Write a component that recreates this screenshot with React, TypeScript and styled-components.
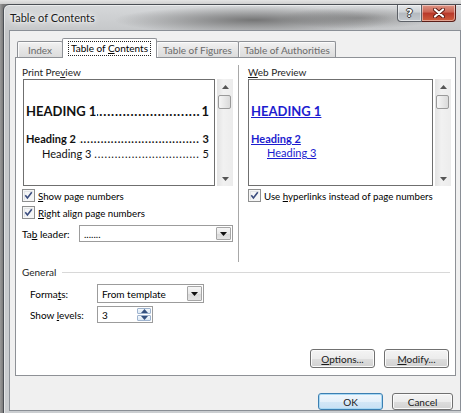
import styled, {createGlobalStyle} from 'styled-components';

const GlobalStyle = createGlobalStyle`
	html, body {
		margin: 0;
		padding: 0;
		background: #5f5f5f;
	}
	* {
		box-sizing: border-box;
	}
`;

const uiFont = `Lato, 'Liberation Sans', Arial, sans-serif`;

const Screen = styled.div`
	width: 461px;
	height: 413px;
	overflow: hidden;
	padding: 4px 0 0 3px;
	background:
		linear-gradient(to bottom, #e4e4e4 0, #cfcfcf 4px, transparent 4px),
		linear-gradient(to right, #9a9a9a 0, #7a7a7a 3px, #6a6a6a 100%);
	font-family: ${uiFont};
	font-size: 10px;
	color: #000;
`;

const Window = styled.div`
	width: 464px;
	height: 414px;
	display: flex;
	flex-direction: column;
	padding: 0 5px;
	border: 1px solid #4b4f55;
	border-radius: 6px 6px 0 0;
	background:
		radial-gradient(ellipse 140px 14px at 250px 15px, rgba(95, 95, 95, 0.8), rgba(95, 95, 95, 0)),
		radial-gradient(ellipse 80px 11px at 355px 13px, rgba(110, 110, 110, 0.6), rgba(110, 110, 110, 0)),
		linear-gradient(to bottom, #d6d8da, #c4c6c8 28px, #cbced1);
	box-shadow: inset 0 0 0 1px rgba(255, 255, 255, 0.5);
`;

const TitleBar = styled.div`
	height: 25px;
	display: flex;
	align-items: flex-start;
`;

const Title = styled.div`
	margin-top: 6px;
	padding-left: 1px;
	font-size: 11px;
	line-height: 14px;
	color: #1a1a1a;
	text-shadow: 0 0 6px #fff, 0 0 10px #fff, 0 0 3px #fff;
`;

const CaptionButtons = styled.div`
	display: flex;
	margin-left: auto;
	margin-right: 5px;
	height: 17px;
`;

const CaptionButton = styled.div<{$close?: boolean}>`
	display: flex;
	align-items: center;
	justify-content: center;
	width: ${p => (p.$close ? 34 : 25)}px;
	height: 17px;
	border: 1px solid ${p => (p.$close ? '#5a1e18' : '#5c6066')};
	border-top: none;
	border-left-width: ${p => (p.$close ? 0 : 1)}px;
	border-radius: ${p => (p.$close ? '0 0 4px 0' : '0 0 0 4px')};
	background: ${p =>
		p.$close
			? 'linear-gradient(to bottom, #dd9585 0%, #cc6352 45%, #b8382a 50%, #cf5d3c 100%)'
			: 'linear-gradient(to bottom, #e6e8ea 0%, #cdd1d5 45%, #b4b9bf 50%, #c4c9ce 100%)'};
	box-shadow: inset 0 0 0 1px rgba(255, 255, 255, 0.45);
`;

const HelpGlyph = styled.span`
	font-family: 'DejaVu Sans', sans-serif;
	font-size: 11px;
	font-weight: 700;
	color: #fff;
	text-shadow: 1px 0 0 #333, -1px 0 0 #333, 0 1px 0 #333, 0 -1px 0 #333;
	line-height: 1;
`;

const Client = styled.div`
	height: 381px;
	display: flex;
	flex-direction: column;
	padding: 7px 4px 0 5px;
	border: 1px solid #8a8f96;
	background: #f0f0f0;
`;

const TabStrip = styled.div`
	position: relative;
	z-index: 1;
	display: flex;
	align-items: flex-end;
	height: 20px;
	margin-bottom: -1px;
	padding-left: 2px;
`;

const Tab = styled.div<{$width: number; $active?: boolean}>`
	display: flex;
	align-items: center;
	justify-content: center;
	width: ${p => p.$width}px;
	height: ${p => (p.$active ? 20 : 16)}px;
	margin-bottom: ${p => (p.$active ? 0 : 1)}px;
	margin-left: -1px;
	border: 1px solid #8e9196;
	border-bottom: none;
	border-radius: 2px 2px 0 0;
	background: ${p =>
		p.$active ? '#fff' : 'linear-gradient(to bottom, #f2f2f2 0%, #e6e6e6 50%, #dcdcdc 100%)'};
	box-shadow: ${p => (p.$active ? 'none' : 'inset 1px 1px 0 #fbfbfb')};
	color: ${p => (p.$active ? '#000' : '#6a6a6a')};
	white-space: nowrap;

	&:first-child {
		margin-left: 0;
	}
`;

const FocusRing = styled.span`
	padding: 1px 2px;
	border: 1px dotted #222;
	line-height: 11px;
`;

const Panel = styled.div`
	width: 441px;
	height: 320px;
	display: flex;
	flex-direction: column;
	border: 1px solid #8e9196;
	background: #fff;
`;

const Upper = styled.div`
	display: flex;
	height: 197px;
	margin-top: 7px;
`;

const Column = styled.div<{$left?: boolean}>`
	display: flex;
	flex-direction: column;
	width: ${p => (p.$left ? '223px' : 'auto')};
	flex: ${p => (p.$left ? 'none' : 1)};
	padding-left: ${p => (p.$left ? 6 : 9)}px;
	border-right: ${p => (p.$left ? '1px solid #a8a8a8' : 'none')};
`;

const SectionLabel = styled.div`
	height: 14px;
	line-height: 14px;
	color: #1e1e1e;
`;

const PreviewFrame = styled.div<{$width: number; $offset: number}>`
	display: flex;
	gap: 2px;
	width: ${p => p.$width}px;
	height: 107px;
	margin-left: ${p => p.$offset}px;
`;

const PreviewBox = styled.div`
	flex: 1;
	display: flex;
	flex-direction: column;
	padding: 23px 5px 0 2px;
	border: 1px solid #6f6f6f;
	background: #fff;
	overflow: hidden;
`;

const TocLine = styled.div<{$size: number; $bold?: boolean; $indent?: number; $gap: number}>`
	display: flex;
	margin-top: ${p => p.$gap}px;
	padding-left: ${p => p.$indent ?? 0}px;
	font-family: ${uiFont};
	font-size: ${p => p.$size}px;
	line-height: ${p => p.$size + 3}px;
	font-weight: ${p => (p.$bold ? 700 : 400)};
	color: #111;
	white-space: nowrap;

	&:first-child {
		margin-top: 0;
	}
`;

const Leader = styled.span<{$space?: number}>`
	flex: 1;
	min-width: 0;
	overflow: hidden;
	direction: rtl;
	margin: 0 ${p => p.$space ?? 0}px;
	letter-spacing: 0.8px;

	&::before {
		content: '..............................................................................';
	}
`;

const WebLink = styled.span<{$size: number; $bold?: boolean; $indent?: number; $gap: number}>`
	display: block;
	margin-top: ${p => p.$gap}px;
	padding-left: ${p => p.$indent ?? 0}px;
	font-size: ${p => p.$size}px;
	line-height: ${p => p.$size + 3}px;
	font-weight: ${p => (p.$bold ? 700 : 400)};
	color: #1c1ccf;
	text-decoration: underline;
	white-space: nowrap;

	&:first-child {
		margin-top: 0;
	}
`;

const Track = styled.div`
	display: flex;
	flex-direction: column;
	width: 16px;
	background: linear-gradient(to right, #e3e3e3, #f1f1f1 40%, #ececec);
`;

const ArrowCell = styled.div`
	display: flex;
	align-items: center;
	justify-content: center;
	height: 15px;
`;

const Thumb = styled.div`
	height: 14px;
	margin: 1px 2px 0 1px;
	border: 1px solid #9a9a9a;
	border-radius: 2px;
	background: linear-gradient(to right, #f6f6f6, #e8e8e8 50%, #dadada);
`;

const TrackFill = styled.div`
	flex: 1;
`;

const CheckRow = styled.div<{$first?: boolean}>`
	display: flex;
	align-items: center;
	gap: 3px;
	height: 17px;
	margin-top: ${p => (p.$first ? 1 : 0)}px;
	font-size: 9.7px;
	white-space: nowrap;
`;

const FieldRow = styled.div<{$top: number; $indent: number; $height: number}>`
	display: flex;
	align-items: center;
	height: ${p => p.$height}px;
	margin-top: ${p => p.$top}px;
	padding-left: ${p => p.$indent}px;
`;

const FieldLabel = styled.div<{$width: number}>`
	width: ${p => p.$width}px;
	flex: none;
`;

const Combo = styled.div<{$width: number; $height: number}>`
	display: flex;
	width: ${p => p.$width}px;
	height: ${p => p.$height}px;
	padding: 1px;
	border: 1px solid #9c9c9c;
	background: #fff;
`;

const ComboValue = styled.div`
	flex: 1;
	display: flex;
	align-items: center;
	padding-left: 3px;
	white-space: nowrap;
`;

const DropButton = styled.div`
	display: flex;
	align-items: center;
	justify-content: center;
	width: 15px;
	border: 1px solid #a6a6a6;
	border-radius: 1px;
	background: linear-gradient(to bottom, #f6f6f6 0%, #e9e9e9 50%, #d9d9d9 51%, #e4e4e4 100%);
`;

const SpinButtons = styled.div`
	display: flex;
	flex-direction: column;
	width: 14px;
	gap: 1px;
`;

const SpinHalf = styled.div`
	flex: 1;
	display: flex;
	align-items: center;
	justify-content: center;
	border: 1px solid #9fb4cf;
	border-radius: 1px;
	background: linear-gradient(to bottom, #f3f8fc, #dbe8f5);
`;

const GroupHeader = styled.div`
	display: flex;
	align-items: center;
	height: 14px;
	margin-top: 3px;
	padding: 0 5px 0 6px;
	color: #1e1e1e;
`;

const GroupLine = styled.div`
	flex: 1;
	height: 1px;
	margin-left: 6px;
	background: #d8d8d8;
`;

const ActionRow = styled.div<{$top: number; $right: number}>`
	display: flex;
	justify-content: flex-end;
	gap: 9px;
	margin-top: ${p => p.$top}px;
	padding-right: ${p => p.$right}px;
`;

const Button = styled.div<{$width: number; $height: number; $default?: boolean}>`
	display: flex;
	align-items: center;
	justify-content: center;
	width: ${p => p.$width}px;
	height: ${p => p.$height}px;
	border: 1px solid ${p => (p.$default ? '#3c7fb1' : '#707070')};
	border-radius: 3px;
	background: ${p =>
		p.$default
			? 'linear-gradient(to bottom, #f1f7fc 0%, #e4f0fa 50%, #d3e7f7 51%, #c8e0f4 100%)'
			: 'linear-gradient(to bottom, #f4f4f4 0%, #ececec 50%, #dedede 51%, #d2d2d2 100%)'};
	box-shadow: inset 0 0 0 1px ${p => (p.$default ? '#a8d8f4' : '#fbfbfb')};
	color: #1a1a1a;
	white-space: nowrap;
`;

const ClientButtons = styled(ActionRow)`
	width: 441px;
`;

const Tri = ({dir, color = '#333'}: {dir: 'up' | 'down'; color?: string}) => (
	<svg width="7" height="4" viewBox="0 0 7 4">
		<polygon points={dir === 'up' ? '0,4 3.5,0 7,4' : '0,0 7,0 3.5,4'} fill={color} />
	</svg>
);

const ScrollBar = () => (
	<Track>
		<ArrowCell>
			<Tri dir="up" color="#555" />
		</ArrowCell>
		<Thumb />
		<TrackFill />
		<ArrowCell>
			<Tri dir="down" color="#555" />
		</ArrowCell>
	</Track>
);

const CheckBox = () => (
	<svg width="13" height="13" viewBox="0 0 13 13">
		<rect x="0.5" y="0.5" width="12" height="12" fill="#f6f6f6" stroke="#8e8f8f" />
		<rect x="2" y="2" width="9" height="9" fill="#e2e4e6" />
		<rect x="3" y="3" width="8" height="8" fill="#f4f5f6" />
		<path d="M3.3 6.3 L5.4 8.9 L9.8 3.2" fill="none" stroke="#3a4c7e" strokeWidth="1.6" />
	</svg>
);

const CloseGlyph = () => (
	<svg width="12" height="10" viewBox="0 0 12 10">
		<path d="M2 1.5 L10 8.5 M10 1.5 L2 8.5" stroke="#5b1a12" strokeWidth="4" strokeLinecap="round" />
		<path d="M2 1.5 L10 8.5 M10 1.5 L2 8.5" stroke="#fff" strokeWidth="2.2" strokeLinecap="round" />
	</svg>
);

export default function App() {
	return (
		<>
			<GlobalStyle />
			<Screen>
				<Window>
					<TitleBar>
						<Title>Table of Contents</Title>
						<CaptionButtons>
							<CaptionButton>
								<HelpGlyph>?</HelpGlyph>
							</CaptionButton>
							<CaptionButton $close>
								<CloseGlyph />
							</CaptionButton>
						</CaptionButtons>
					</TitleBar>
					<Client>
						<TabStrip>
							<Tab $width={46}>Index</Tab>
							<Tab $width={95} $active>
								<FocusRing>
									Table of <u>C</u>ontents
								</FocusRing>
							</Tab>
							<Tab $width={83}>Table of Figures</Tab>
							<Tab $width={98}>Table of Authorities</Tab>
						</TabStrip>
						<Panel>
							<Upper>
								<Column $left>
									<SectionLabel>
										Print Pre<u>v</u>iew
									</SectionLabel>
									<PreviewFrame $width={210} $offset={1}>
										<PreviewBox>
											<TocLine $size={13} $bold $gap={0}>
												<span>HEADING 1</span>
												<Leader $space={1} />
												<span>1</span>
											</TocLine>
											<TocLine $size={11} $bold $gap={13}>
												<span>Heading 2</span>
												<Leader $space={3} />
												<span>3</span>
											</TocLine>
											<TocLine $size={11} $indent={16} $gap={1}>
												<span>Heading 3</span>
												<Leader $space={3} />
												<span>5</span>
											</TocLine>
										</PreviewBox>
										<ScrollBar />
									</PreviewFrame>
									<CheckRow $first>
										<CheckBox />
										<span>
											<u>S</u>how page numbers
										</span>
									</CheckRow>
									<CheckRow>
										<CheckBox />
										<span>
											<u>R</u>ight align page numbers
										</span>
									</CheckRow>
									<FieldRow $top={4} $indent={0} $height={17}>
										<FieldLabel $width={57}>
											Ta<u>b</u> leader:
										</FieldLabel>
										<Combo $width={154} $height={17}>
											<ComboValue>.......</ComboValue>
											<DropButton>
												<Tri dir="down" color="#111" />
											</DropButton>
										</Combo>
									</FieldRow>
								</Column>
								<Column>
									<SectionLabel>
										<u>W</u>eb Preview
									</SectionLabel>
									<PreviewFrame $width={203} $offset={0}>
										<PreviewBox>
											<WebLink $size={13} $bold $gap={0}>
												HEADING 1
											</WebLink>
											<WebLink $size={11} $bold $gap={13}>
												Heading 2
											</WebLink>
											<WebLink $size={11} $indent={16} $gap={0}>
												Heading 3
											</WebLink>
										</PreviewBox>
										<ScrollBar />
									</PreviewFrame>
									<CheckRow $first>
										<CheckBox />
										<span>
											Use <u>h</u>yperlinks instead of page numbers
										</span>
									</CheckRow>
								</Column>
							</Upper>
							<GroupHeader>
								<span>General</span>
								<GroupLine />
							</GroupHeader>
							<FieldRow $top={5} $indent={14} $height={19}>
								<FieldLabel $width={67}>
									Forma<u>t</u>s:
								</FieldLabel>
								<Combo $width={107} $height={19}>
									<ComboValue>From template</ComboValue>
									<DropButton>
										<Tri dir="down" color="#111" />
									</DropButton>
								</Combo>
							</FieldRow>
							<FieldRow $top={3} $indent={14} $height={17}>
								<FieldLabel $width={67}>
									Show <u>l</u>evels:
								</FieldLabel>
								<Combo $width={56} $height={17}>
									<ComboValue>3</ComboValue>
									<SpinButtons>
										<SpinHalf>
											<Tri dir="up" color="#34507e" />
										</SpinHalf>
										<SpinHalf>
											<Tri dir="down" color="#34507e" />
										</SpinHalf>
									</SpinButtons>
								</Combo>
							</FieldRow>
							<ActionRow $top={26} $right={6}>
								<Button $width={65} $height={19}>
									<span>
										<u>O</u>ptions...
									</span>
								</Button>
								<Button $width={65} $height={19}>
									<span>
										<u>M</u>odify...
									</span>
								</Button>
							</ActionRow>
						</Panel>
						<ClientButtons $top={17} $right={3}>
							<Button $width={65} $height={17} $default>
								OK
							</Button>
							<Button $width={61} $height={17}>
								Cancel
							</Button>
						</ClientButtons>
					</Client>
				</Window>
			</Screen>
		</>
	);
}
